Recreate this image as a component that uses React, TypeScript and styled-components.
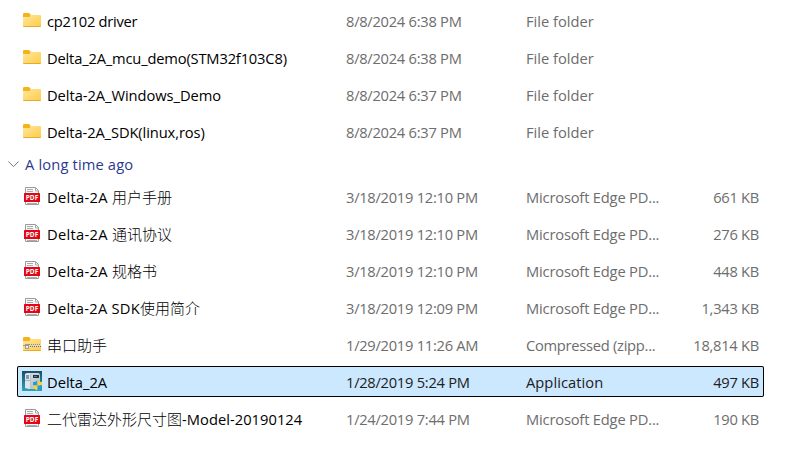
import React from "react";
import styled, { createGlobalStyle, css } from "styled-components";

const GlobalStyle = createGlobalStyle`
  * { box-sizing: border-box; }
  body {
    margin: 0;
    background: #fff;
    overflow: hidden;
    font-family: "Open Sans", "Noto Sans CJK SC", sans-serif;
    font-size: 14.7px;
  }
`;

const FileList = styled.main`
  width: 798px;
  height: 467px;
  padding-top: 5px;
  background: #fff;
`;

const Row = styled.div<{ $selected?: boolean }>`
  display: grid;
  grid-template-columns: 24px 299px 180px 145px 89px;
  align-items: center;
  width: 747px;
  height: 31px;
  margin: 0 0 6px 17px;
  padding-left: 5px;
  line-height: 31px;
  white-space: nowrap;
  color: #6d6d6d;
  border-radius: 2px;
  ${(p) =>
    p.$selected &&
    css`
      background: #cce8ff;
      box-shadow: inset 0 0 0 1px #000;
      color: #202020;
    `}
`;

const IconSlot = styled.span`
  display: flex;
  width: 20px;
  height: 31px;
  padding-top: 5px;
`;

const Cell = styled.span<{ $track?: number; $end?: boolean }>`
  letter-spacing: ${(p) => p.$track ?? -0.27}px;
  padding-left: 1px;
  padding-top: 1px;
  height: 31px;
  justify-self: ${(p) => (p.$end ? "end" : "start")};
`;

const Name = styled(Cell)`
  color: #000;
`;

const Han = styled.span`
  font-family: "Noto Sans CJK SC", sans-serif;
  font-size: 15px;
  font-weight: 300;
  letter-spacing: 0;
  line-height: 1;
`;

const Group = styled.div`
  display: flex;
  align-items: center;
  height: 28px;
  padding: 0 0 6px 8px;
  gap: 6px;
  color: #2b3a90;
`;

const GroupLabel = styled.span`
  letter-spacing: 0.15px;
`;

const FolderShape = () => (
  <>
    <path d="M1 6V3.200Q1 2 2.200 2H7l1.500 1.500v2.500z" fill="#f5b31b" />
    <path d="M1 6h6.500L9 4h9q1 0 1 1v10q0 1-1 1H2q-1 0-1-1z" fill="url(#folderFill)" />
    <path d="M1.300 15.500h17.400" stroke="#e5ab2c" />
  </>
);

const FolderGradient = () => (
  <defs>
    <linearGradient id="folderFill" x1="0" y1="0" x2="1" y2="1">
      <stop offset="0" stopColor="#ffe79e" />
      <stop offset="1" stopColor="#ffcb45" />
    </linearGradient>
  </defs>
);

const FolderIcon = () => (
  <svg width="20" height="20" viewBox="0 -1 20 20">
    <FolderGradient />
    <FolderShape />
  </svg>
);

const ZipIcon = () => (
  <svg width="20" height="20" viewBox="0 -1 20 20">
    <FolderGradient />
    <FolderShape />
    <path d="M4 9h15v3H4z" fill="#e4d9b5" />
    <path d="M7 9.500h12" stroke="#8f8b82" strokeDasharray="1 1" />
    <path d="M8 11.500h11" stroke="#6f6c66" strokeDasharray="1 1" />
    <path d="M1 10.500h3" stroke="#b49a55" />
    <path d="M3 9h4v5H3z" fill="#9b9b98" />
    <path d="M4 11h2v2H4z" fill="#eee" />
  </svg>
);

const PdfText = styled.text`
  font: 700 6.5px "Open Sans", sans-serif;
  fill: #fff;
`;

const PdfIcon = () => (
  <svg width="20" height="20" viewBox="0 0 20 20">
    <path d="M3.500 1.500h10l3 3v14h-13z" fill="#fafafa" stroke="#9b9b9b" />
    <path d="M13.500 1.500v3.500h3M5 3.500h6M5 5.500h6M5 17.500h10" fill="none" stroke="#aaa" />
    <rect x="2" y="7" width="16" height="9" rx="0.500" fill="#e30716" />
    <PdfText x="10" y="13.900" textAnchor="middle" textLength="12.400" lengthAdjust="spacingAndGlyphs">PDF</PdfText>
  </svg>
);

const AppIcon = () => (
  <svg width="20" height="20" viewBox="0 0 20 20">
    <defs>
      <linearGradient id="appBack" x1="0" y1="0" x2="0" y2="1">
        <stop offset="0" stopColor="#174f68" />
        <stop offset="1" stopColor="#2da5bb" />
      </linearGradient>
      <linearGradient id="appMetal" x1="0" y1="0" x2="1" y2="1">
        <stop offset="0" stopColor="#d9e0e5" />
        <stop offset="1" stopColor="#b4bdc3" />
      </linearGradient>
    </defs>
    <path d="M0 0h20v20H0z" fill="url(#appBack)" />
    <path d="M3 3l2-1h12l1 2v14H9l-6-1z" fill="url(#appMetal)" />
    <path d="M3 3l5-1v16l-5-1z" fill="#dfe5e9" />
    <path d="M4 4h3v4H4z" fill="#8298b5" />
    <path d="M11 4h6v3h-6z" fill="#203544" />
    <path d="M12 5.500h3" stroke="#4e7d9a" />
    <path d="M3 9.500h6" stroke="#a7b2b9" />
    <path d="M8.500 3v15" stroke="#b8c1c7" />
    <path d="M11 11q2.500 0 4.500-1.500v5H11z" fill="#239be3" />
    <path d="M15.500 9.500q2 1.500 4.500 1.500v3.500h-4.500z" fill="#ffd12e" />
    <path d="M11 14.500h4.500v5q-4-1.500-4.500-5z" fill="#ffd12e" />
    <path d="M15.500 14.500H20q-.5 3.500-4.500 5z" fill="#239be3" />
  </svg>
);

const Chevron = () => (
  <svg width="11" height="8" viewBox="0 0 11 8">
    <path d="M.4 1.500l5.100 5.100 5.100-5.100" fill="none" stroke="#777" strokeWidth="1" />
  </svg>
);

const icons = { folder: FolderIcon, pdf: PdfIcon, zip: ZipIcon, app: AppIcon };

type Item = {
  icon: keyof typeof icons;
  name: React.ReactNode;
  date: string;
  type: string;
  size?: string;
  selected?: boolean;
  track: number;
};

const recent: Item[] = [
  { icon: "folder", track: -0.26, name: "cp2102 driver", date: "8/8/2024 6:38 PM", type: "File folder" },
  { icon: "folder", track: -0.17, name: "Delta_2A_mcu_demo(STM32f103C8)", date: "8/8/2024 6:38 PM", type: "File folder" },
  { icon: "folder", track: -0.05, name: "Delta-2A_Windows_Demo", date: "8/8/2024 6:37 PM", type: "File folder" },
  { icon: "folder", track: -0.1, name: "Delta-2A_SDK(linux,ros)", date: "8/8/2024 6:37 PM", type: "File folder" },
];

const older: Item[] = [
  { icon: "pdf", track: 0.3, name: <>Delta-2A <Han>用户手册</Han></>, date: "3/18/2019 12:10 PM", type: "Microsoft Edge PD...", size: "661 KB" },
  { icon: "pdf", track: 0.3, name: <>Delta-2A <Han>通讯协议</Han></>, date: "3/18/2019 12:10 PM", type: "Microsoft Edge PD...", size: "276 KB" },
  { icon: "pdf", track: 0.3, name: <>Delta-2A <Han>规格书</Han></>, date: "3/18/2019 12:10 PM", type: "Microsoft Edge PD...", size: "448 KB" },
  { icon: "pdf", track: 0.25, name: <>Delta-2A SDK<Han>使用简介</Han></>, date: "3/18/2019 12:09 PM", type: "Microsoft Edge PD...", size: "1,343 KB" },
  { icon: "zip", track: 0, name: <Han>串口助手</Han>, date: "1/29/2019 11:26 AM", type: "Compressed (zipp...", size: "18,814 KB" },
  { icon: "app", track: 0, name: "Delta_2A", date: "1/28/2019 5:24 PM", type: "Application", size: "497 KB", selected: true },
  { icon: "pdf", track: 0.04, name: <><Han>二代雷达外形尺寸图</Han>-Model-20190124</>, date: "1/24/2019 7:44 PM", type: "Microsoft Edge PD...", size: "190 KB" },
];

const typeTrack: Record<string, number> = {
  "File folder": 0,
  Application: 0.05,
  "Microsoft Edge PD...": -0.18,
  "Compressed (zipp...": -0.27,
};

const FileRow = ({ item }: { item: Item }) => {
  const Icon = icons[item.icon];
  return (
    <Row $selected={item.selected}>
      <IconSlot><Icon /></IconSlot>
      <Name $track={item.track}>{item.name}</Name>
      <Cell>{item.date}</Cell>
      <Cell $track={typeTrack[item.type]}>{item.type}</Cell>
      <Cell $end>{item.size}</Cell>
    </Row>
  );
};

export default function App() {
  return (
    <>
      <GlobalStyle />
      <FileList>
        {recent.map((item, i) => <FileRow key={i} item={item} />)}
        <Group><Chevron /><GroupLabel>A long time ago</GroupLabel></Group>
        {older.map((item, i) => <FileRow key={i} item={item} />)}
      </FileList>
    </>
  );
}
